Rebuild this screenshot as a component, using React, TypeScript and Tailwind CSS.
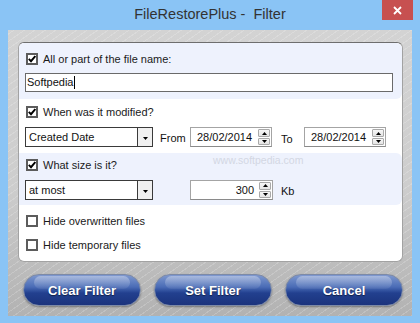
import type { ReactNode } from "react";

function Check({ checked }: { checked?: boolean }) {
  return (
    <span className="flex h-[12px] w-[12px] shrink-0 items-center justify-center border-2 border-[#5c5c5c] bg-white">
      {checked && (
        <svg width="8" height="8" viewBox="0 0 8 8">
          <path d="M0.8 3.8 L3 6.2 L7.3 1" fill="none" stroke="#000" strokeWidth="1.9" />
        </svg>
      )}
    </span>
  );
}

function CheckRow({ checked, children }: { checked?: boolean; children: ReactNode }) {
  return (
    <div className="ml-[1px] flex h-[14px] items-center gap-[5px]">
      <Check checked={checked} />
      <span className="text-[11px] leading-none text-[#1a1a1a]">{children}</span>
    </div>
  );
}

function Select({ value }: { value: string }) {
  return (
    <div className="flex h-[20px] w-[128px] shrink-0 border border-[#3a3a3a] bg-white">
      <span className="flex flex-1 items-center pl-[3px] text-[11px]">{value}</span>
      <span className="flex w-[15px] items-center justify-center border-l border-[#3a3a3a] bg-[#f0f0f0] pt-[2px]">
        <svg width="5" height="3" viewBox="0 0 5 3">
          <path d="M0 0 H5 L2.5 3 Z" fill="#000" />
        </svg>
      </span>
    </div>
  );
}

function Spinner() {
  return (
    <div className="my-[1px] mr-[1px] flex w-[12px] flex-col gap-[1px]">
      <span className="flex flex-1 items-center justify-center rounded-[1px] border border-[#a9a9a9] bg-[linear-gradient(#f7f7f7,#e4e4e4)]">
        <svg width="5" height="3" viewBox="0 0 5 3">
          <path d="M0 3 H5 L2.5 0 Z" fill="#000" />
        </svg>
      </span>
      <span className="flex flex-1 items-center justify-center rounded-[1px] border border-[#a9a9a9] bg-[linear-gradient(#f7f7f7,#e4e4e4)]">
        <svg width="5" height="3" viewBox="0 0 5 3">
          <path d="M0 0 H5 L2.5 3 Z" fill="#000" />
        </svg>
      </span>
    </div>
  );
}

function NumBox({ value, w, right }: { value: string; w: string; right?: boolean }) {
  return (
    <div className={`flex h-[20px] shrink-0 border border-[#a4a4a4] border-b-[#8a8a8a] bg-white ${w}`}>
      <span
        className={`flex flex-1 items-center text-[11px] ${right ? "justify-end pr-[5px]" : "pl-[6px]"}`}
      >
        {value}
      </span>
      <Spinner />
    </div>
  );
}

function PillButton({ label }: { label: string }) {
  return (
    <button className="relative h-[32px] w-[118px] overflow-hidden rounded-full border border-[#7d8aa6] bg-[linear-gradient(to_bottom,#7e98cf_0%,#4a6cb6_40%,#22408f_60%,#1b337d_100%)] shadow-[0_1px_2px_rgba(0,0,0,0.35)]">
      <span className="absolute left-[10px] right-[10px] top-[1px] h-[13px] rounded-full bg-[linear-gradient(to_bottom,rgba(255,255,255,0.35),rgba(255,255,255,0.05))]" />
      <span className="relative text-[13px] font-bold text-white [text-shadow:0_1px_1px_rgba(0,0,0,0.5)]">
        {label}
      </span>
    </button>
  );
}

export default function App() {
  return (
    <div className="flex h-[323px] w-[420px] flex-col overflow-hidden bg-[#8ac4f5] font-['Liberation_Sans',Arial,sans-serif] text-[#111]">
      <div className="relative flex h-[30px] items-center justify-center">
        <span className="whitespace-pre pb-[1px] text-[14.5px] text-[#333]">FileRestorePlus -  Filter</span>
        <div className="absolute right-[7px] top-0 flex h-[20px] w-[31px] items-center justify-center bg-[#c75050]">
          <svg width="9" height="9" viewBox="0 0 9 9">
            <path d="M1 1 L8 8 M8 1 L1 8" stroke="#fff" strokeWidth="1.8" />
          </svg>
        </div>
      </div>

      <div className="mx-[8px] flex h-[286px] flex-col bg-[#c9c9c9] bg-[repeating-linear-gradient(-35deg,rgba(255,255,255,0.18)_0px,rgba(255,255,255,0.18)_1px,transparent_1px,transparent_6px),linear-gradient(to_bottom,#d3d3d3_0%,#cdcdcd_55%,#b2b2b2_100%)] pl-[10px] pt-[12px]">
        <div className="relative flex h-[220px] w-[385px] flex-col overflow-hidden rounded-[6px] border border-[#a2a2a2] border-t-[#6e6e6e] bg-white">
          <div className="flex h-[56px] flex-col rounded-r-[6px] bg-[#eef2fd] px-[6px] pt-[9px]">
            <CheckRow checked>All or part of the file name:</CheckRow>
            <div className="mt-[7px] flex h-[19px] w-[368px] items-center border border-[#6a6a6a] bg-white pl-[1px] text-[11px]">
              Softpedia
              <span className="ml-[1px] h-[13px] w-[1px] bg-black" />
            </div>
          </div>

          <div className="flex h-[54px] flex-col px-[6px] pt-[6px]">
            <CheckRow checked>When was it modified?</CheckRow>
            <div className="mt-[8px] flex items-center">
              <Select value="Created Date" />
              <span className="ml-[7px] w-[30px] pt-[1px] text-[11px]">From</span>
              <NumBox value="28/02/2014" w="w-[82px]" />
              <span className="ml-[9px] w-[23px] pt-[4px] text-[11px]">To</span>
              <NumBox value="28/02/2014" w="w-[82px]" />
            </div>
          </div>

          <div className="relative flex h-[52px] flex-col rounded-r-[6px] bg-[#eef2fd] px-[6px] pt-[5px]">
            <CheckRow checked>What size is it?</CheckRow>
            <div className="mt-[8px] flex items-center">
              <Select value="at most" />
              <span className="ml-[37px]" />
              <NumBox value="300" w="w-[83px]" right />
              <span className="ml-[8px] pt-[2px] text-[11px]">Kb</span>
            </div>
            <span className="pointer-events-none absolute left-[194px] top-[2px] text-[10.5px] leading-none text-[#d3d7e3]">
              www.softpedia.com
            </span>
          </div>

          <div className="flex h-[56px] flex-col gap-[10px] px-[6px] pt-[9px]">
            <CheckRow>Hide overwritten files</CheckRow>
            <CheckRow>Hide temporary files</CheckRow>
          </div>
        </div>

        <div className="mt-[12px] flex gap-[13px] pl-[5px]">
          <PillButton label="Clear Filter" />
          <PillButton label="Set Filter" />
          <PillButton label="Cancel" />
        </div>
      </div>
    </div>
  );
}
